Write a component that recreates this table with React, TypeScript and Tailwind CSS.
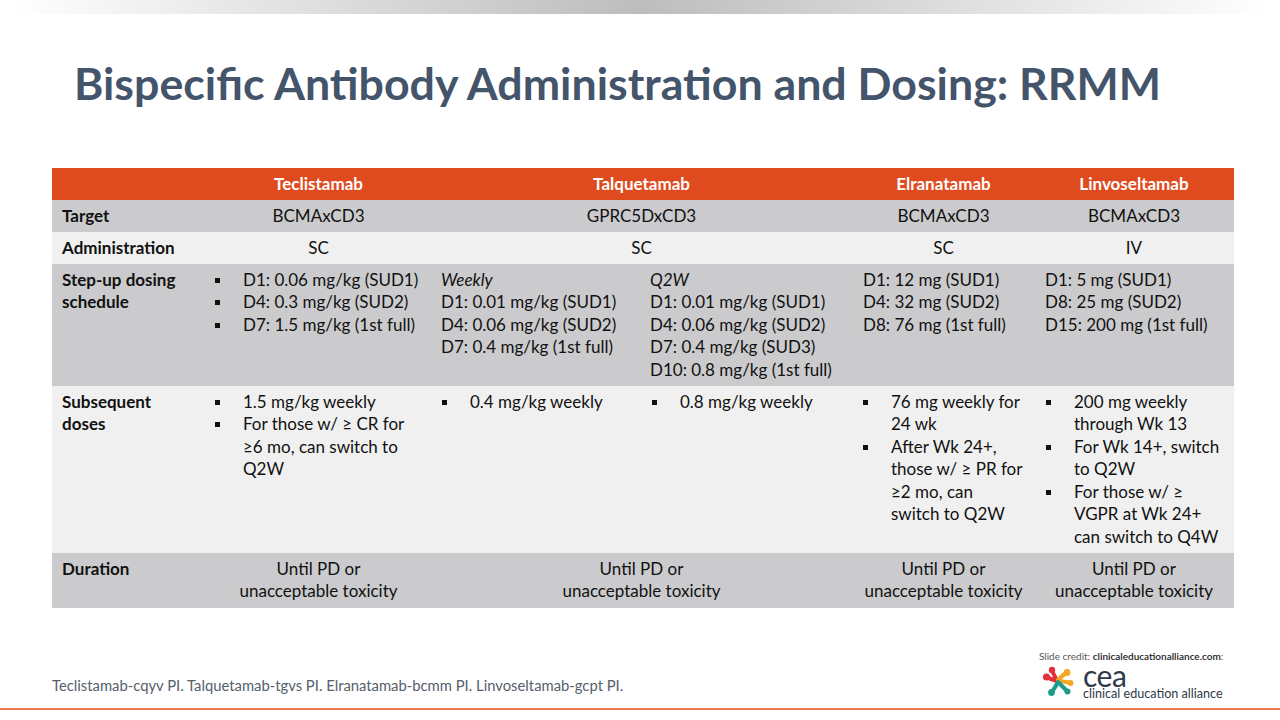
import React from "react";

const font = { fontFamily: "Lato, 'Liberation Sans', sans-serif" };

function Bullet() {
  return (
    <span className="w-[28px] shrink-0 flex items-center h-[22.5px]">
      <span className="block w-[5px] h-[5px] bg-[#111111]" />
    </span>
  );
}

function BList({ items }: { items: React.ReactNode[] }) {
  return (
    <div className="flex flex-col">
      {items.map((it, i) => (
        <div key={i} className="flex">
          <Bullet />
          <div className="whitespace-nowrap">{it}</div>
        </div>
      ))}
    </div>
  );
}

function Logo() {
  return (
    <svg width="36" height="36" viewBox="0 0 36 36">
      <path d="M16 18 C12 17 9 16 6 14" stroke="#e5303b" strokeWidth="4" fill="none" strokeLinecap="round" />
      <path d="M16 18 C14 14 13 11 11 8" stroke="#e5303b" strokeWidth="4" fill="none" strokeLinecap="round" />
      <circle cx="5.5" cy="14" r="3.6" fill="#e5303b" />
      <circle cx="11" cy="7" r="3.2" fill="#e5303b" />
      <path d="M17 17 C20 14 22 12 25 10" stroke="#f5a623" strokeWidth="4" fill="none" strokeLinecap="round" />
      <path d="M18 18 C22 18 25 19 29 20" stroke="#f5a623" strokeWidth="4" fill="none" strokeLinecap="round" />
      <circle cx="26" cy="9.5" r="3.4" fill="#f5a623" />
      <circle cx="29.5" cy="20" r="3" fill="#f5a623" />
      <path d="M17 19 C15 23 13 26 11 29" stroke="#1c9a8a" strokeWidth="4" fill="none" strokeLinecap="round" />
      <path d="M18 20 C21 23 23 25 26 28" stroke="#1c9a8a" strokeWidth="4" fill="none" strokeLinecap="round" />
      <circle cx="10.5" cy="29.5" r="3.4" fill="#1c9a8a" />
      <circle cx="26.5" cy="28.5" r="3" fill="#1c9a8a" />
    </svg>
  );
}

const cols = "grid grid-cols-[155px_223px_210px_213px_181px_200px]";
const cell = "py-[4.75px] leading-[22.5px]";

export default function App() {
  return (
    <div className="w-[1280px] h-[720px] bg-white flex flex-col overflow-hidden text-[#111111]" style={font}>
      <div className="mx-[8px] h-[14px] shrink-0 bg-[linear-gradient(to_right,#ffffff,#bdbdbd_50%,#ffffff)]" />
      <h1 className="mt-[42px] ml-[74px] text-[44.7px] leading-[54px] font-bold text-[#44546a] whitespace-nowrap">
        Bispecific Antibody Administration and Dosing: RRMM
      </h1>

      <div className="mt-[58px] ml-[52px] w-[1182px] text-[17px]">
        <div className={`${cols} bg-[#e04a1f] text-white font-bold`}>
          <div className={cell} />
          <div className={`${cell} text-center`}>Teclistamab</div>
          <div className={`${cell} text-center col-span-2`}>Talquetamab</div>
          <div className={`${cell} text-center`}>Elranatamab</div>
          <div className={`${cell} text-center`}>Linvoseltamab</div>
        </div>
        <div className={`${cols} bg-[#cbcbcd]`}>
          <div className={`${cell} pl-[10px] font-bold`}>Target</div>
          <div className={`${cell} text-center`}>BCMAxCD3</div>
          <div className={`${cell} text-center col-span-2`}>GPRC5DxCD3</div>
          <div className={`${cell} text-center`}>BCMAxCD3</div>
          <div className={`${cell} text-center`}>BCMAxCD3</div>
        </div>
        <div className={`${cols} bg-[#f0f0f0]`}>
          <div className={`${cell} pl-[10px] font-bold`}>Administration</div>
          <div className={`${cell} text-center`}>SC</div>
          <div className={`${cell} text-center col-span-2`}>SC</div>
          <div className={`${cell} text-center`}>SC</div>
          <div className={`${cell} text-center`}>IV</div>
        </div>
        <div className={`${cols} bg-[#cbcbcd]`}>
          <div className={`${cell} pl-[10px] font-bold`}>
            Step-up dosing
            <br />
            schedule
          </div>
          <div className={`${cell} pl-[8px]`}>
            <BList items={["D1: 0.06 mg/kg (SUD1)", "D4: 0.3 mg/kg (SUD2)", "D7: 1.5 mg/kg (1st full)"]} />
          </div>
          <div className={`${cell} pl-[11px] whitespace-nowrap`}>
            <div className="italic">Weekly</div>
            <div>D1: 0.01 mg/kg (SUD1)</div>
            <div>D4: 0.06 mg/kg (SUD2)</div>
            <div>D7: 0.4 mg/kg (1st full)</div>
          </div>
          <div className={`${cell} pl-[10px] whitespace-nowrap`}>
            <div className="italic">Q2W</div>
            <div>D1: 0.01 mg/kg (SUD1)</div>
            <div>D4: 0.06 mg/kg (SUD2)</div>
            <div>D7: 0.4 mg/kg (SUD3)</div>
            <div>D10: 0.8 mg/kg (1st full)</div>
          </div>
          <div className={`${cell} pl-[10px] whitespace-nowrap`}>
            <div>D1: 12 mg (SUD1)</div>
            <div>D4: 32 mg (SUD2)</div>
            <div>D8: 76 mg (1st full)</div>
          </div>
          <div className={`${cell} pl-[11px] whitespace-nowrap`}>
            <div>D1: 5 mg (SUD1)</div>
            <div>D8: 25 mg (SUD2)</div>
            <div>D15: 200 mg (1st full)</div>
          </div>
        </div>
        <div className={`${cols} bg-[#f0f0f0]`}>
          <div className={`${cell} pl-[10px] font-bold`}>
            Subsequent
            <br />
            doses
          </div>
          <div className={`${cell} pl-[8px]`}>
            <BList
              items={[
                "1.5 mg/kg weekly",
                <>
                  For those w/ ≥ CR for
                  <br />≥6 mo, can switch to
                  <br />
                  Q2W
                </>,
              ]}
            />
          </div>
          <div className={`${cell} pl-[12px]`}>
            <BList items={["0.4 mg/kg weekly"]} />
          </div>
          <div className={`${cell} pl-[12px]`}>
            <BList items={["0.8 mg/kg weekly"]} />
          </div>
          <div className={`${cell} pl-[10px]`}>
            <BList
              items={[
                <>
                  76 mg weekly for
                  <br />
                  24 wk
                </>,
                <>
                  After Wk 24+,
                  <br />
                  those w/ ≥ PR for
                  <br />≥2 mo, can
                  <br />
                  switch to Q2W
                </>,
              ]}
            />
          </div>
          <div className={`${cell} pl-[12px]`}>
            <BList
              items={[
                <>
                  200 mg weekly
                  <br />
                  through Wk 13
                </>,
                <>
                  For Wk 14+, switch
                  <br />
                  to Q2W
                </>,
                <>
                  For those w/ ≥
                  <br />
                  VGPR at Wk 24+
                  <br />
                  can switch to Q4W
                </>,
              ]}
            />
          </div>
        </div>
        <div className={`${cols} bg-[#cbcbcd]`}>
          <div className={`${cell} pl-[10px] font-bold`}>Duration</div>
          <div className={`${cell} text-center`}>
            Until PD or
            <br />
            unacceptable toxicity
          </div>
          <div className={`${cell} text-center col-span-2`}>
            Until PD or
            <br />
            unacceptable toxicity
          </div>
          <div className={`${cell} text-center whitespace-nowrap`}>
            Until PD or
            <br />
            unacceptable toxicity
          </div>
          <div className={`${cell} text-center whitespace-nowrap`}>
            Until PD or
            <br />
            unacceptable toxicity
          </div>
        </div>
      </div>

      <div className="flex-1 flex items-end justify-between pl-[52px] pr-[54px]">
        <div className="text-[14.8px] leading-[18px] text-[#56606b] mb-[14px] whitespace-nowrap">
          Teclistamab-cqyv PI. Talquetamab-tgvs PI. Elranatamab-bcmm PI. Linvoseltamab-gcpt PI.
        </div>
        <div className="flex flex-col mb-[8px] w-[187px]">
          <div className="text-[10px] text-[#555555] whitespace-nowrap leading-[12px]">
            Slide credit: <span className="text-[#222222] font-semibold">clinicaleducationalliance.com</span>:
          </div>
          <div className="flex items-end">
            <div className="ml-[2px] mb-[1px]">
              <Logo />
            </div>
            <div className="ml-[6px] flex flex-col text-[#2e3a48]">
              <div className="text-[30px] leading-[26px] font-normal tracking-[-0.5px]">cea</div>
              <div className="text-[12.6px] leading-[12px] whitespace-nowrap">clinical education alliance</div>
            </div>
          </div>
        </div>
      </div>
      <div className="h-[2px] bg-[#f07a4f] shrink-0" />
      <div className="h-[10px] shrink-0" />
    </div>
  );
}
